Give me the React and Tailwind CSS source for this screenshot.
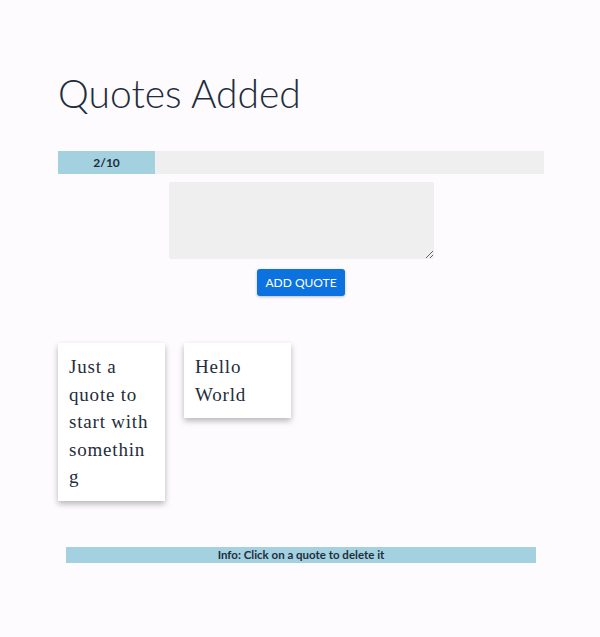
export default function App() {
  const quotes = ["Just a quote to start with something", "Hello World"];
  const max = 10;
  const pct = (quotes.length / max) * 100;
  return (
    <div className="min-h-[637px] w-[600px] bg-[#fdfbfe] text-[#1f2d3d]" style={{ fontFamily: "Lato, 'Open Sans', sans-serif" }}>
      <div className="mx-[58px] w-[486px] pt-[68px]">
        <h1 className="text-[39px] font-light leading-[50px]">Quotes Added</h1>
        <div className="mt-[33px] flex h-[23px] w-full bg-[#efefef]">
          <div className="flex items-center justify-center bg-[#a3d1df] text-[12px] font-bold" style={{ width: `${pct}%` }}>
            {quotes.length}/{max}
          </div>
        </div>
        <div className="mt-[8px] flex flex-col items-center">
          <textarea className="h-[77px] w-[265px] resize-y rounded-[2px] bg-[#efefef] outline-none" />
          <button className="mt-[10px] flex h-[27px] w-[88px] items-center justify-center rounded-[3px] bg-[#0b72e0] text-[12px] text-white shadow-[0_1px_3px_rgba(0,0,0,0.25)]">
            ADD QUOTE
          </button>
        </div>
        <div className="mt-[47px] flex items-start gap-[19px]">
          {quotes.map((q) => (
            <div
              key={q}
              className="w-[107px] bg-white px-[11px] py-[10px] text-[19px] leading-[27.5px] tracking-[0.8px] [overflow-wrap:anywhere] shadow-[0_3px_6px_rgba(0,0,0,0.28)]"
              style={{ fontFamily: "'Liberation Serif', 'DejaVu Serif', serif" }}
            >
              {q}
            </div>
          ))}
        </div>
      </div>
      <div className="mx-[66px] mt-[46px] flex h-[16px] w-[470px] items-center justify-center bg-[#a3d1df] text-[11.5px] font-bold">
        Info: Click on a quote to delete it
      </div>
    </div>
  );
}
